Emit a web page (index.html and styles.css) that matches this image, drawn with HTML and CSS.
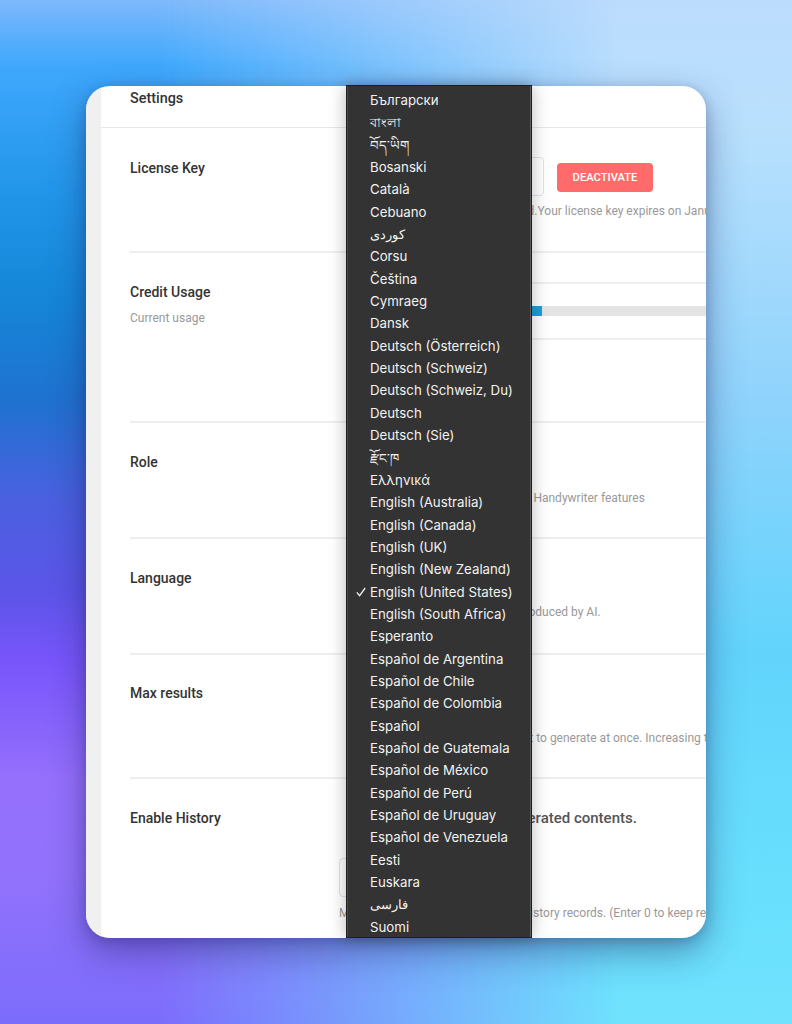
FILE: index.html
```html
<!DOCTYPE html>
<html lang="en">
<head>
  <meta charset="UTF-8" />
  <meta name="viewport" content="width=device-width, initial-scale=1" />
  <title>Settings</title>
  <link rel="stylesheet" href="styles.css">
</head>
<body>
  <div class="window">
    <div class="window-clip">
      <div class="sidebar"></div>
      <div class="main">
        <div class="page-title">Settings</div>

        <div class="row row-license">
          <div class="row-label">License Key</div>
          <div class="row-body">
            <div class="license-line">
              <input class="text-input license-input" type="text" />
              <button class="btn-danger">DEACTIVATE</button>
            </div>
            <p class="hint hint-license">Your license has been activated.Your license key expires on January 1, 2030</p>
          </div>
        </div>

        <div class="row row-credit">
          <div class="row-label">
            Credit Usage
            <p class="hint">Current usage</p>
          </div>
          <div class="row-body">
            <div class="usage-cell">
              <div class="bar"><div class="bar-fill"></div></div>
            </div>
          </div>
        </div>

        <div class="row row-role">
          <div class="row-label">Role</div>
          <div class="row-body">
            <p class="hint hint-role">Select the role that fits you to use Handywriter features</p>
          </div>
        </div>

        <div class="row row-language">
          <div class="row-label">Language</div>
          <div class="row-body">
            <p class="hint hint-language">Choose a language of content produced by AI.</p>
          </div>
        </div>

        <div class="row row-max">
          <div class="row-label">Max results</div>
          <div class="row-body">
            <p class="hint hint-max">The number of results you want to generate at once. Increasing the number</p>
          </div>
        </div>

        <div class="row row-history">
          <div class="row-label">Enable History</div>
          <div class="row-body row-body-wide">
            <div class="check-text">Keep a history of the generated contents.</div>
            <input class="text-input history-input" type="text" />
            <p class="hint hint-history">Maximum number of days to keep history records. (Enter 0 to keep records forever)</p>
          </div>
        </div>
      </div>
    </div>

    <ul class="lang-menu">
      <li>Български</li>
      <li>বাংলা</li>
      <li>བོད་ཡིག</li>
      <li>Bosanski</li>
      <li>Català</li>
      <li>Cebuano</li>
      <li>کوردی</li>
      <li>Corsu</li>
      <li>Čeština</li>
      <li>Cymraeg</li>
      <li>Dansk</li>
      <li>Deutsch (Österreich)</li>
      <li>Deutsch (Schweiz)</li>
      <li>Deutsch (Schweiz, Du)</li>
      <li>Deutsch</li>
      <li>Deutsch (Sie)</li>
      <li>རྫོང་ཁ</li>
      <li>Ελληνικά</li>
      <li>English (Australia)</li>
      <li>English (Canada)</li>
      <li>English (UK)</li>
      <li>English (New Zealand)</li>
      <li class="selected">
        <svg class="check" viewBox="0 0 10 10" width="10" height="10"><path d="M0.8 5.4 L3.6 8.6 L9.2 1" fill="none" stroke="#f2f2f2" stroke-width="1.3"/></svg>
        English (United States)
      </li>
      <li>English (South Africa)</li>
      <li>Esperanto</li>
      <li>Español de Argentina</li>
      <li>Español de Chile</li>
      <li>Español de Colombia</li>
      <li>Español</li>
      <li>Español de Guatemala</li>
      <li>Español de México</li>
      <li>Español de Perú</li>
      <li>Español de Uruguay</li>
      <li>Español de Venezuela</li>
      <li>Eesti</li>
      <li>Euskara</li>
      <li>فارسی</li>
      <li>Suomi</li>
    </ul>
  </div>
</body>
</html>
```

FILE: styles.css
```css
* {
  box-sizing: border-box;
}
html, body {
  height: 100%;
}
body {
  margin: 0;
  padding: 86px;
  font-family: Roboto, sans-serif;
  color: #333;
  overflow: hidden;
  background: linear-gradient(to bottom, #bcdcfd 0, #b8e0fd 130px, #8fd3fc 400px, #62d4fc 650px, #68e0fd 900px, #70e2fd 1024px);
}
/* left half of the backdrop, faded out to the right */
body::before {
  content: "";
  position: absolute;
  inset: 0;
  z-index: -1;
  background: linear-gradient(to bottom, #7db8fb 0, #3fa8fd 65px, #2095e8 200px, #1586d8 300px, #1f72d0 400px, #4a60e0 500px, #5b55e8 590px, #7855fb 660px, #9570fd 780px, #9272fc 870px, #7c6cfc 1024px);
  -webkit-mask-image: linear-gradient(to right, #000 20%, transparent 78%);
  mask-image: linear-gradient(to right, #000 20%, transparent 78%);
}

.window {
  position: relative;
  height: 100%;
  border-radius: 24px;
  box-shadow: 0 14px 36px rgba(30,30,90,0.42), 0 3px 12px rgba(20,30,80,0.22);
}
.window-clip {
  display: flex;
  height: 100%;
  border-radius: 24px;
  overflow: hidden;
  background: #fff;
}
.sidebar {
  width: 15px;
  flex-shrink: 0;
  background: #f0f0f0;
}
.main {
  flex: 1;
  min-width: 0;
  overflow: hidden;
}

.page-title {
  height: 42px;
  padding: 4px 0 0 29px;
  font-size: 14.4px;
  font-weight: 500;
  line-height: 18px;
  border-bottom: 1px solid #e8e8e8;
}

.row {
  display: flex;
  margin-left: 29px;
  border-bottom: 2px solid #eee;
}
.row:last-child {
  border-bottom: 0;
}
.row-license { height: 125px; padding-top: 30px; }
.row-credit { height: 170px; padding-top: 29px; }
.row-role { height: 116px; padding-top: 29px; }
.row-language { height: 116px; padding-top: 29px; }
.row-max { height: 124px; padding-top: 28px; }
.row-history { padding-top: 29px; }

.row-label {
  width: 209px;
  flex-shrink: 0;
  font-size: 14px;
  font-weight: 500;
  line-height: 20px;
}
.row-body {
  flex: 1;
  min-width: 0;
  padding-left: 12px;
  white-space: nowrap;
}
.row-body-wide {
  padding-left: 0;
}

.hint {
  margin: 0;
  font-size: 12px;
  font-weight: 400;
  line-height: 16px;
  color: #999;
}
.row-label .hint {
  margin-top: 8px;
}

.license-line {
  display: flex;
  align-items: center;
  margin-top: -1px;
}
.text-input {
  display: block;
  height: 39px;
  border: 1px solid #e2e2e2;
  border-radius: 4px;
  background: #fff;
}
.license-input {
  width: 193px;
}
.btn-danger {
  width: 96px;
  height: 29px;
  margin: 2px 0 0 13px;
  border: 0;
  border-radius: 4px;
  background: #ff6b6b;
  color: #fff;
  font-family: Roboto, sans-serif;
  font-size: 11.2px;
  font-weight: 500;
}
.hint-license {
  margin: 7px 0 0 15px;
}

.usage-cell {
  height: 58px;
  padding-top: 22px;
  border-top: 2px solid #eee;
  border-bottom: 2px solid #eee;
}
.bar {
  height: 10px;
  background: #e4e4e4;
}
.bar-fill {
  width: 191px;
  height: 100%;
  background: #1a9fdc;
}

.hint-role { margin: 38px 0 0 2px; }
.hint-language { margin: 36px 0 0 4px; }
.hint-max { margin: 47px 0 0 14px; }

.check-text {
  margin-left: 22px;
  font-size: 15px;
  font-weight: 500;
  line-height: 20px;
  color: #555;
}
.history-input {
  width: 190px;
  margin-top: 30px;
}
.hint-history {
  margin-top: 8px;
}

.lang-menu {
  position: absolute;
  top: -1px;
  left: 260px;
  width: 186px;
  height: 853px;
  margin: 0;
  padding: 3px 0 0 23px;
  overflow: hidden;
  list-style: none;
  background: #333;
  border: 1px solid #1e1e1e;
  box-shadow: inset -1px 0 0 #5c5c5c, inset 1px 0 0 #4a4a4a, 0 0 16px rgba(0,0,0,0.28);
  font-family: Inter, sans-serif;
  font-size: 13.25px;
  line-height: 22.35px;
  color: #f2f2f2;
  white-space: nowrap;
}
.lang-menu li {
  position: relative;
}
.check {
  position: absolute;
  left: -14px;
  top: 6px;
}
```
